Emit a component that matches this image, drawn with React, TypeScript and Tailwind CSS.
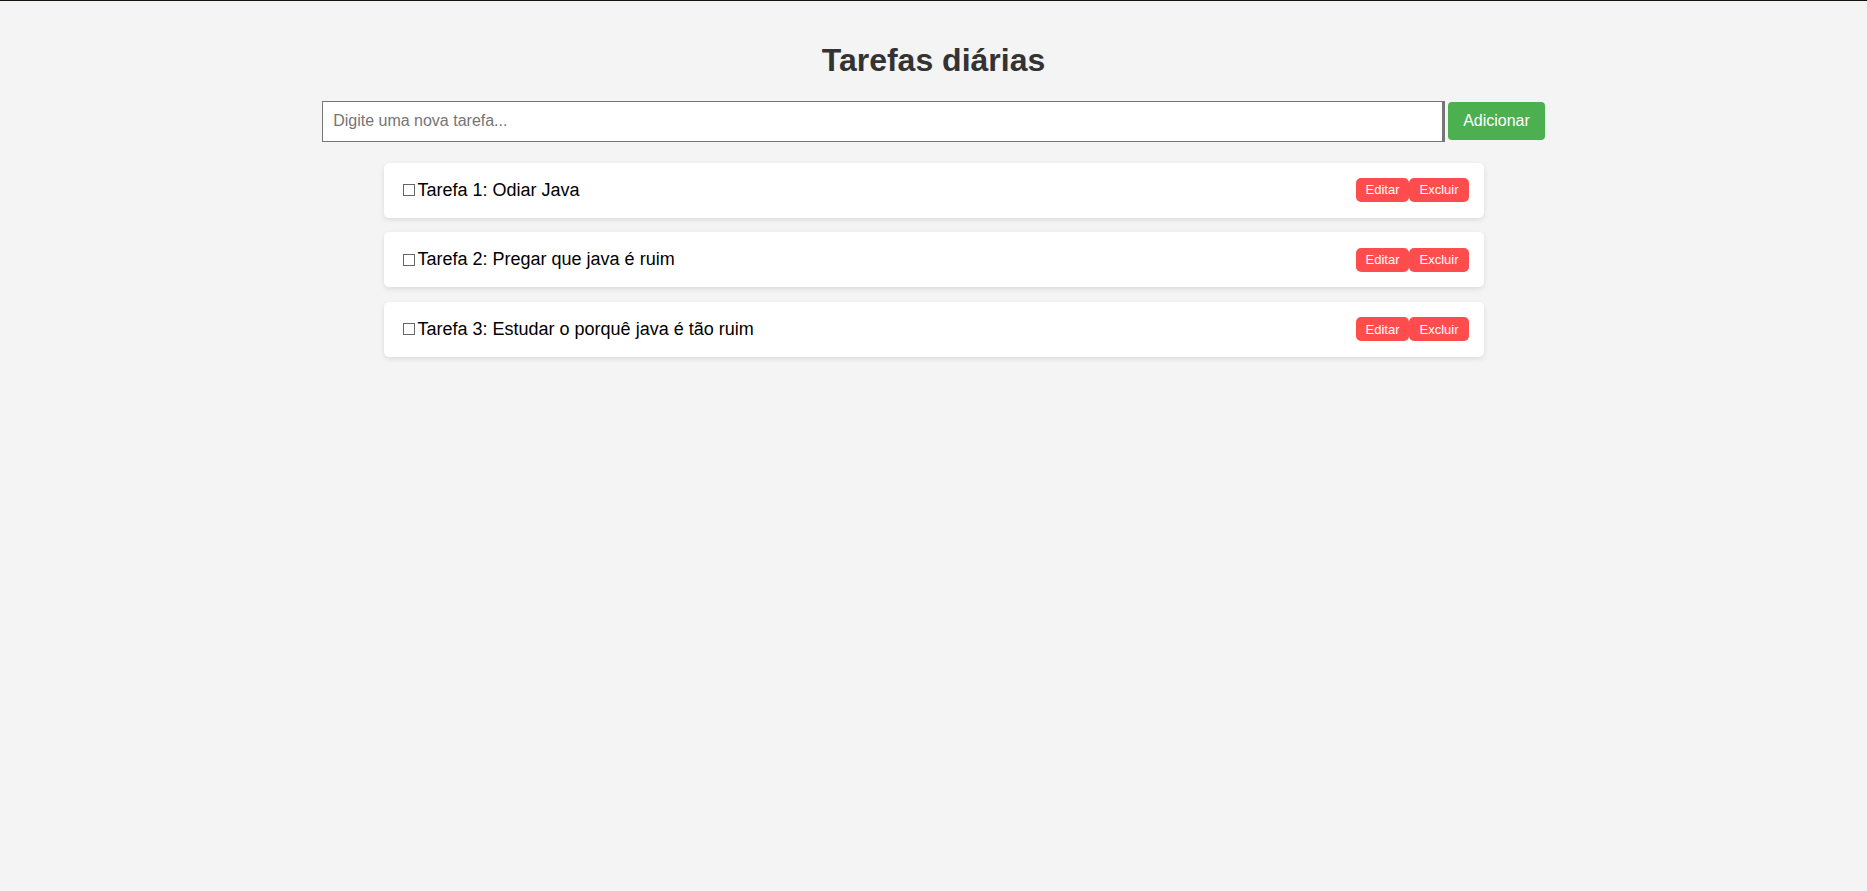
import { useState } from "react";

type Task = {
  id: number;
  text: string;
};

const initialTasks: Task[] = [
  { id: 1, text: "Tarefa 1: Odiar Java" },
  { id: 2, text: "Tarefa 2: Pregar que java é ruim" },
  { id: 3, text: "Tarefa 3: Estudar o porquê java é tão ruim" },
];

function TaskItem({ task }: { task: Task }) {
  return (
    <li className="flex h-[55px] items-center justify-between rounded-[5px] bg-white px-[15px] shadow-[0_2px_5px_rgba(0,0,0,0.1)]">
      <span className="flex items-center text-[18px] text-black">
        {/* ballot box glyph */}
        <span className="ml-[4px] mr-[3px] inline-block h-[12px] w-[12px] border border-[#666]" />
        {task.text}
      </span>
      <div className="flex">
        <button className="h-[24px] rounded-[5px] bg-[#ff4d4d] px-[10px] text-[13px] text-white">
          Editar
        </button>
        <button className="h-[24px] rounded-[5px] bg-[#ff4d4d] px-[10px] text-[13px] text-white">
          Excluir
        </button>
      </div>
    </li>
  );
}

export default function App() {
  const [tasks] = useState<Task[]>(initialTasks);
  const [value, setValue] = useState("");

  return (
    <div
      className="h-[891px] overflow-hidden border-t border-[#15120d] bg-[#f4f4f4] p-[20px]"
      style={{ fontFamily: '"Liberation Sans", Arial, sans-serif' }}
    >
      <h1 className="my-[21.44px] text-center text-[32px] leading-[36.8px] font-bold text-[#333]">
        Tarefas diárias
      </h1>

      {/* New task form */}
      <div className="flex items-center justify-center gap-[3px]">
        <input
          value={value}
          onChange={(e) => setValue(e.target.value)}
          placeholder="Digite uma nova tarefa..."
          className="box-border h-[41px] w-[1123px] border border-r-[3px] border-[#767676] bg-white px-[10px] text-[16px] text-black outline-none placeholder:text-[#757575]"
        />
        <button className="h-[38px] rounded-[4px] bg-[#4caf50] px-[15px] text-[16px] text-white">
          Adicionar
        </button>
      </div>

      {/* Task list */}
      <ul className="mx-auto mt-[21px] flex w-[1100px] flex-col gap-[14.6px]">
        {tasks.map((task) => (
          <TaskItem key={task.id} task={task} />
        ))}
      </ul>
    </div>
  );
}
